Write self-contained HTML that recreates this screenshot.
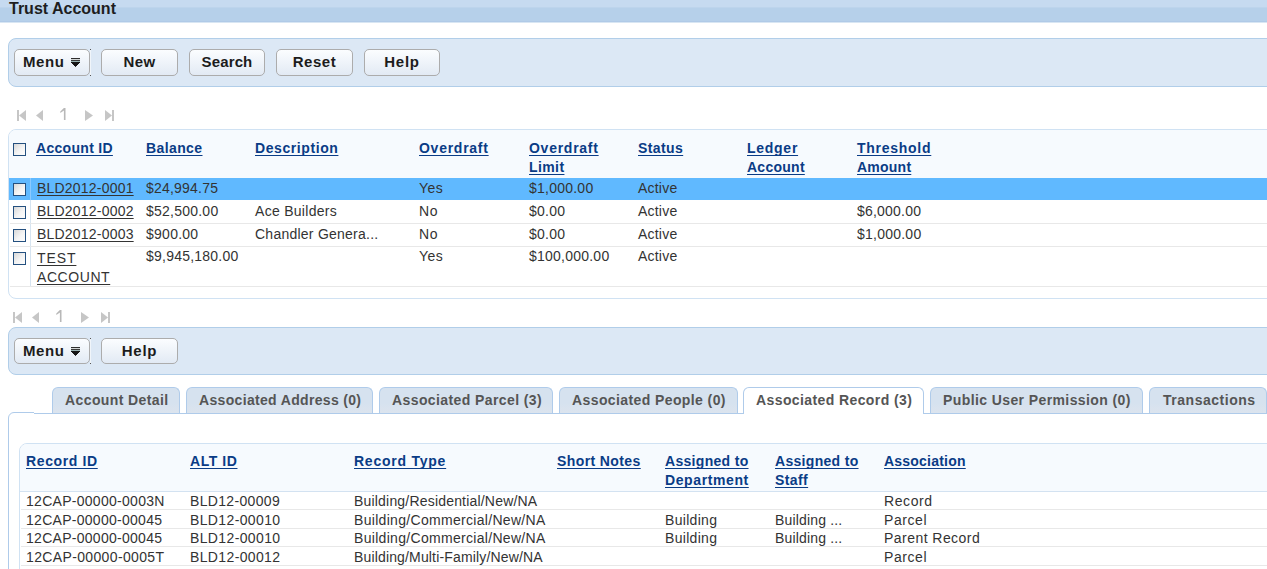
<!DOCTYPE html>
<html><head><meta charset="utf-8">
<style>
*{box-sizing:border-box}
html,body{margin:0;padding:0;background:#fff;width:1267px;height:569px;overflow:hidden;position:relative}
body{font-family:"Liberation Sans",sans-serif;font-size:14px;color:#333}
.abs{position:absolute}
#hdr{left:0;top:0;width:1267px;height:23px;background:linear-gradient(#c6daf0 0,#c6daf0 7px,#bdd4ec 7px,#bdd4ec 8px,#b6d0ea 8px,#b6d0ea 21px,#b0cae7 21px,#b0cae7 22px,#d8e6f3 22px,#d8e6f3 23px)}
#hdr span{position:absolute;left:9px;top:-1px;font-weight:bold;font-size:16px;color:#1e1e1e;line-height:20px}
.tb{position:absolute;left:8px;width:1280px;height:49px;background:#dce8f5;border:1px solid #b1cee9;border-radius:8px}
.btn{position:absolute;height:27px;border:1px solid #acacac;letter-spacing:-0.2px;border-radius:5px;background:linear-gradient(#fbfdff,#e2eaf4);font-weight:bold;font-size:15px;color:#1c1c1c;text-align:center;line-height:24px;white-space:nowrap}
.mi{position:absolute;left:56px;top:8px}
.tbl{position:absolute;border:1px solid #d0e2f3;border-radius:9px;overflow:hidden;background:#fff}
.th{position:absolute;font-weight:bold;color:#0a3c86;text-decoration:underline;text-decoration-skip-ink:none;text-underline-offset:2px;line-height:19px;white-space:nowrap;letter-spacing:0.4px}
.td{position:absolute;line-height:19px;white-space:nowrap;color:#333;letter-spacing:0.18px}
.lnk{text-decoration:underline;text-decoration-skip-ink:none;text-underline-offset:2px;margin-left:1px}
.cb{position:absolute;width:13px;height:13px;border:1px solid #24507f;background:linear-gradient(135deg,#d8d8d8,#f4f4f4 55%,#fdfdfd)}
.sep{position:absolute;height:1px;background:#e8e8e8}
.tab{position:absolute;top:387px;height:26px;border:1px solid #afcbea;border-bottom:none;border-radius:6px 6px 0 0;background:linear-gradient(#d6e2ef 60%,#dce4ee);font-weight:bold;color:#555;font-size:14px;line-height:24px;padding-left:12px;white-space:nowrap;letter-spacing:0.4px}
</style></head><body>
<div id="hdr" class="abs"><span>Trust Account</span></div>
<div class="tb" style="top:38px"></div>
<div class="btn" style="left:14px;top:49px;width:76px;height:27px;text-align:left;padding-left:8px;letter-spacing:0.6px">Menu<svg class="mi" width="9" height="10" viewBox="0 0 9 10" shape-rendering="crispEdges"><rect x="0" y="0" width="9" height="1" fill="#2e2e2e"/><rect x="0" y="1" width="9" height="1" fill="#d4d8d8"/><rect x="0" y="2" width="9" height="1" fill="#3a3a3a"/><rect x="0" y="3" width="9" height="1" fill="#98b2b2"/><rect x="0" y="4" width="9" height="1" fill="#151515"/><rect x="1" y="5" width="7" height="1" fill="#151515"/><rect x="2" y="6" width="5" height="1" fill="#151515"/><rect x="3" y="7" width="3" height="1" fill="#151515"/><rect x="4" y="8" width="1" height="1" fill="#333"/></svg></div><div class="abs" style="left:90px;top:49px;width:1px;height:27px;background:linear-gradient(#555 0,#555 1px,#f0f5fa 1px,#f0f5fa 26px,#555 26px)"></div>
<div class="btn" style="left:101px;top:49px;width:77px;height:27px;letter-spacing:0.4px">New</div>
<div class="btn" style="left:189px;top:49px;width:76px;height:27px;letter-spacing:0.13px">Search</div>
<div class="btn" style="left:276px;top:49px;width:77px;height:27px;letter-spacing:0.55px">Reset</div>
<div class="btn" style="left:364px;top:49px;width:76px;height:27px;letter-spacing:0.75px">Help</div>
<svg class="abs" style="left:17px;top:110px" width="100" height="12" viewBox="0 0 100 12"><rect x="0" y="0" width="2" height="11" fill="#c6c6c6"/><path d="M9 0 L2 5.5 L9 11 Z" fill="#c6c6c6"/><path d="M26 0 L19 5.5 L26 11 Z" fill="#c6c6c6"/><path d="M68 0 L76 5.5 L68 11 Z" fill="#c6c6c6"/><path d="M88 0 L95 5.5 L88 11 Z" fill="#c6c6c6"/><rect x="95" y="0" width="2" height="11" fill="#c6c6c6"/></svg><svg class="abs" style="left:60px;top:108px" width="8" height="13" viewBox="0 0 8 13"><path d="M3.9 0 H5.5 V12 H3.9 V2.6 L0.3 4.9 V3.5 Z" fill="#b8b8b8"/></svg>
<div class="tbl" style="left:8px;top:129px;width:1270px;height:170px;border-radius:8px">
<div class="abs" style="left:0;top:0;right:0;height:48px;background:#f6fafe"></div>
<div class="abs" style="left:0;top:48px;right:0;height:22px;background:#60b9ff"></div>
</div>
<div class="abs" style="left:30px;top:178px;width:1px;height:108px;background:#d6e4f1"></div>
<div class="abs" style="left:30px;top:178px;width:1px;height:22px;background:#8ccaff"></div>
<div class="sep" style="left:10px;top:223px;width:1257px"></div>
<div class="sep" style="left:10px;top:246px;width:1257px"></div>
<div class="sep" style="left:10px;top:286px;width:1257px"></div>
<div class="cb" style="left:13px;top:143px"></div>
<div class="th" style="left:36px;top:139px;letter-spacing:0.300px">Account ID</div>
<div class="th" style="left:146px;top:139px;letter-spacing:0.400px">Balance</div>
<div class="th" style="left:255px;top:139px;letter-spacing:0.582px">Description</div>
<div class="th" style="left:419px;top:139px;letter-spacing:0.733px">Overdraft</div>
<div class="th" style="left:529px;top:139px;letter-spacing:0.733px">Overdraft</div>
<div class="th" style="left:529px;top:158px;letter-spacing:0.400px">Limit</div>
<div class="th" style="left:638px;top:139px;letter-spacing:0.400px">Status</div>
<div class="th" style="left:747px;top:139px;letter-spacing:0.733px">Ledger</div>
<div class="th" style="left:747px;top:158px;letter-spacing:0.257px">Account</div>
<div class="th" style="left:857px;top:139px;letter-spacing:0.733px">Threshold</div>
<div class="th" style="left:857px;top:158px;letter-spacing:0.233px">Amount</div>
<div class="cb" style="left:13px;top:183px"></div>
<div class="td" style="left:36px;top:179px;letter-spacing:0.205px;"><span class="lnk">BLD2012-0001</span></div>
<div class="td" style="left:146px;top:179px;letter-spacing:0.210px;">$24,994.75</div>
<div class="td" style="left:419px;top:179px;letter-spacing:0.425px;">Yes</div>
<div class="td" style="left:529px;top:179px;letter-spacing:0.235px;">$1,000.00</div>
<div class="td" style="left:638px;top:179px;letter-spacing:0.213px;">Active</div>
<div class="cb" style="left:13px;top:206px"></div>
<div class="td" style="left:36px;top:202px;letter-spacing:0.205px;"><span class="lnk">BLD2012-0002</span></div>
<div class="td" style="left:146px;top:202px;letter-spacing:0.233px;">$52,500.00</div>
<div class="td" style="left:255px;top:202px;letter-spacing:0.288px;">Ace Builders</div>
<div class="td" style="left:419px;top:202px;letter-spacing:0.752px;">No</div>
<div class="td" style="left:529px;top:202px;letter-spacing:0.273px;">$0.00</div>
<div class="td" style="left:638px;top:202px;letter-spacing:0.213px;">Active</div>
<div class="td" style="left:857px;top:202px;letter-spacing:0.213px;">$6,000.00</div>
<div class="cb" style="left:13px;top:229px"></div>
<div class="td" style="left:36px;top:225px;letter-spacing:0.205px;"><span class="lnk">BLD2012-0003</span></div>
<div class="td" style="left:146px;top:225px;letter-spacing:0.256px;">$900.00</div>
<div class="td" style="left:255px;top:225px;letter-spacing:0.242px;">Chandler Genera...</div>
<div class="td" style="left:419px;top:225px;letter-spacing:0.752px;">No</div>
<div class="td" style="left:529px;top:225px;letter-spacing:0.273px;">$0.00</div>
<div class="td" style="left:638px;top:225px;letter-spacing:0.213px;">Active</div>
<div class="td" style="left:857px;top:225px;letter-spacing:0.235px;">$1,000.00</div>
<div class="cb" style="left:13px;top:252px"></div>
<div class="td" style="left:36px;top:249px;letter-spacing:0.900px;"><span class="lnk">TEST</span></div>
<div class="td" style="left:36px;top:268px;letter-spacing:0.571px;"><span class="lnk">ACCOUNT</span></div>
<div class="td" style="left:146px;top:247px;letter-spacing:0.226px;">$9,945,180.00</div>
<div class="td" style="left:419px;top:247px;letter-spacing:0.425px;">Yes</div>
<div class="td" style="left:529px;top:247px;letter-spacing:0.231px;">$100,000.00</div>
<div class="td" style="left:638px;top:247px;letter-spacing:0.213px;">Active</div>
<svg class="abs" style="left:13px;top:312px" width="100" height="12" viewBox="0 0 100 12"><rect x="0" y="0" width="2" height="11" fill="#c6c6c6"/><path d="M9 0 L2 5.5 L9 11 Z" fill="#c6c6c6"/><path d="M26 0 L19 5.5 L26 11 Z" fill="#c6c6c6"/><path d="M68 0 L76 5.5 L68 11 Z" fill="#c6c6c6"/><path d="M88 0 L95 5.5 L88 11 Z" fill="#c6c6c6"/><rect x="95" y="0" width="2" height="11" fill="#c6c6c6"/></svg><svg class="abs" style="left:56px;top:310px" width="8" height="13" viewBox="0 0 8 13"><path d="M3.9 0 H5.5 V12 H3.9 V2.6 L0.3 4.9 V3.5 Z" fill="#b8b8b8"/></svg>
<div class="tb" style="top:327px;height:48px"></div>
<div class="btn" style="left:14px;top:338px;width:76px;height:26px;text-align:left;padding-left:8px;letter-spacing:0.6px">Menu<svg class="mi" width="9" height="10" viewBox="0 0 9 10" shape-rendering="crispEdges"><rect x="0" y="0" width="9" height="1" fill="#2e2e2e"/><rect x="0" y="1" width="9" height="1" fill="#d4d8d8"/><rect x="0" y="2" width="9" height="1" fill="#3a3a3a"/><rect x="0" y="3" width="9" height="1" fill="#98b2b2"/><rect x="0" y="4" width="9" height="1" fill="#151515"/><rect x="1" y="5" width="7" height="1" fill="#151515"/><rect x="2" y="6" width="5" height="1" fill="#151515"/><rect x="3" y="7" width="3" height="1" fill="#151515"/><rect x="4" y="8" width="1" height="1" fill="#333"/></svg></div><div class="abs" style="left:90px;top:338px;width:1px;height:26px;background:linear-gradient(#555 0,#555 1px,#f0f5fa 1px,#f0f5fa 25px,#555 25px)"></div>
<div class="btn" style="left:101px;top:338px;width:77px;height:26px;letter-spacing:0.75px">Help</div>
<div class="abs" style="left:8px;top:412px;width:1270px;height:200px;border:1px solid #afcbea;border-radius:6px"></div>
<div class="abs" style="left:34px;top:412px;width:1240px;height:1px;background:#fff"></div><div class="abs" style="left:34px;top:413px;width:1240px;height:1px;background:#afcbea"></div>
<div class="tab" style="left:52px;width:128px;">Account Detail</div>
<div class="tab" style="left:186px;width:187px;letter-spacing:0.33px;">Associated Address (0)</div>
<div class="tab" style="left:379px;width:174px;">Associated Parcel (3)</div>
<div class="tab" style="left:559px;width:179px;">Associated People (0)</div>
<div class="tab" style="left:743px;width:181px;background:#fff;height:27px;">Associated Record (3)</div>
<div class="tab" style="left:930px;width:213px;">Public User Permission (0)</div>
<div class="tab" style="left:1149px;width:118px;letter-spacing:0.52px;padding-left:13px;">Transactions</div>
<div class="tbl" style="left:19px;top:443px;width:1260px;height:200px;border-radius:8px">
<div class="abs" style="left:0;top:0;right:0;height:48px;background:#f6fafe;border-bottom:1px solid #d3e2f1"></div>
</div>
<div class="sep" style="left:21px;top:509px;width:1246px"></div>
<div class="sep" style="left:21px;top:528px;width:1246px"></div>
<div class="sep" style="left:21px;top:546px;width:1246px"></div>
<div class="sep" style="left:21px;top:565px;width:1246px"></div>
<div class="th" style="left:26px;top:452px;letter-spacing:0.622px">Record ID</div>
<div class="th" style="left:190px;top:452px;letter-spacing:0.567px">ALT ID</div>
<div class="th" style="left:354px;top:452px;letter-spacing:0.764px">Record Type</div>
<div class="th" style="left:557px;top:452px;letter-spacing:0.400px">Short Notes</div>
<div class="th" style="left:665px;top:452px;letter-spacing:0.309px">Assigned to</div>
<div class="th" style="left:665px;top:471px;letter-spacing:0.600px">Department</div>
<div class="th" style="left:775px;top:452px;letter-spacing:0.309px">Assigned to</div>
<div class="th" style="left:775px;top:471px;letter-spacing:0.400px">Staff</div>
<div class="th" style="left:884px;top:452px;letter-spacing:0.218px">Association</div>
<div class="td" style="left:26px;top:492px;letter-spacing:0.282px;">12CAP-00000-0003N</div>
<div class="td" style="left:190px;top:492px;letter-spacing:0.335px;">BLD12-00009</div>
<div class="td" style="left:354px;top:492px;letter-spacing:0.191px;">Building/Residential/New/NA</div>
<div class="td" style="left:884px;top:492px;letter-spacing:0.600px;">Record</div>
<div class="td" style="left:26px;top:511px;letter-spacing:0.280px;">12CAP-00000-00045</div>
<div class="td" style="left:190px;top:511px;letter-spacing:0.371px;">BLD12-00010</div>
<div class="td" style="left:354px;top:511px;letter-spacing:0.307px;">Building/Commercial/New/NA</div>
<div class="td" style="left:665px;top:511px;letter-spacing:0.300px;">Building</div>
<div class="td" style="left:775px;top:511px;letter-spacing:0.167px;">Building ...</div>
<div class="td" style="left:884px;top:511px;letter-spacing:0.583px;">Parcel</div>
<div class="td" style="left:26px;top:529px;letter-spacing:0.280px;">12CAP-00000-00045</div>
<div class="td" style="left:190px;top:529px;letter-spacing:0.371px;">BLD12-00010</div>
<div class="td" style="left:354px;top:529px;letter-spacing:0.307px;">Building/Commercial/New/NA</div>
<div class="td" style="left:665px;top:529px;letter-spacing:0.300px;">Building</div>
<div class="td" style="left:775px;top:529px;letter-spacing:0.167px;">Building ...</div>
<div class="td" style="left:884px;top:529px;letter-spacing:0.454px;">Parent Record</div>
<div class="td" style="left:26px;top:548px;letter-spacing:0.358px;">12CAP-00000-0005T</div>
<div class="td" style="left:190px;top:548px;letter-spacing:0.364px;">BLD12-00012</div>
<div class="td" style="left:354px;top:548px;letter-spacing:0.154px;">Building/Multi-Family/New/NA</div>
<div class="td" style="left:884px;top:548px;letter-spacing:0.583px;">Parcel</div>
</body></html>
